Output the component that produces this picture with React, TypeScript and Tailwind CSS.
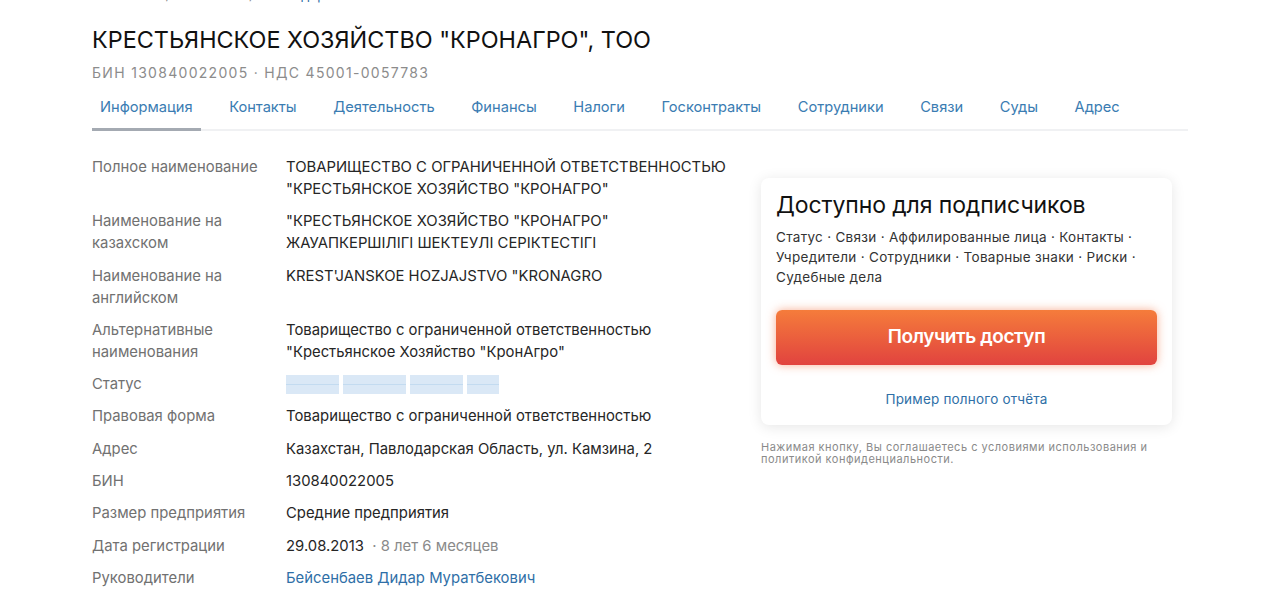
import React from "react";

const tabs = ["Информация", "Контакты", "Деятельность", "Финансы", "Налоги", "Госконтракты", "Сотрудники", "Связи", "Суды", "Адрес"];

function Blur({ w }: { w: number }) {
  return (
    <span className="inline-flex flex-col justify-center h-[19px] bg-[#dae8f6]" style={{ width: w }}>
      <span className="block h-[1px] bg-[#c3dbf0]" />
    </span>
  );
}

const rows: { label: React.ReactNode; value: React.ReactNode }[] = [
  { label: "Полное наименование", value: <>ТОВАРИЩЕСТВО С ОГРАНИЧЕННОЙ ОТВЕТСТВЕННОСТЬЮ<br />"КРЕСТЬЯНСКОЕ ХОЗЯЙСТВО "КРОНАГРО"</> },
  { label: <>Наименование на<br />казахском</>, value: <>"КРЕСТЬЯНСКОЕ ХОЗЯЙСТВО "КРОНАГРО"<br />ЖАУАПКЕРШІЛІГІ ШЕКТЕУЛІ СЕРІКТЕСТІГІ</> },
  { label: <>Наименование на<br />английском</>, value: <>KREST'JANSKOE HOZJAJSTVO "KRONAGRO</> },
  { label: <>Альтернативные<br />наименования</>, value: <>Товарищество с ограниченной ответственностью<br />"Крестьянское Хозяйство "КронАгро"</> },
  { label: "Статус", value: <span className="flex gap-[4px] items-center h-[22px]"><Blur w={53} /><Blur w={63} /><Blur w={53} /><Blur w={32} /></span> },
  { label: "Правовая форма", value: "Товарищество с ограниченной ответственностью" },
  { label: "Адрес", value: "Казахстан, Павлодарская Область, ул. Камзина, 2" },
  { label: "БИН", value: "130840022005" },
  { label: "Размер предприятия", value: "Средние предприятия" },
  { label: "Дата регистрации", value: <>29.08.2013 <span className="text-[#8a8a8a]">&nbsp;· 8 лет 6 месяцев</span></> },
  { label: "Руководители", value: <span className="text-[#2f6fa7]">Бейсенбаев Дидар Муратбекович</span> },
];

export default function App() {
  return (
    <div className="w-[1280px] h-[601px] overflow-hidden bg-white font-['Inter','Liberation_Sans',sans-serif] text-[#222]">
      <div className="ml-[92px] w-[1096px]">
        <div className="-mt-[13px] h-[16px] text-[13px] leading-[16px] text-[#8a8a8a] flex gap-[6px] tracking-[0.3px]">
          <span>Казахстан</span><span>/</span><span>Компании</span><span>/</span><span className="text-[#2f6fa7]">Павлодарская</span>
        </div>
        <h1 className="mt-[22px] text-[23.4px] leading-[30px] font-normal text-[#111]">
          КРЕСТЬЯНСКОЕ ХОЗЯЙСТВО "КРОНАГРО", ТОО
        </h1>
        <div className="mt-[9px] text-[14px] leading-[18px] tracking-[1.3px] text-[#8c8c8c]">
          БИН 130840022005 · НДС 45001-0057783
        </div>
        <div className="mt-[9px] flex border-b-[2px] border-[#f0f1f3]">
          {tabs.map((t, i) => (
            <div
              key={t}
              className={
                "px-[8px] mr-[20.6px] pt-[6px] pb-[11px] text-[14.65px] leading-[20px] text-[#3a7cb2] -mb-[2px] border-b-[3px] " +
                (i === 0 ? "border-[#a4aab2]" : "border-transparent")
              }
            >
              {t}
            </div>
          ))}
        </div>
        <div className="flex mt-[25px]">
          <div className="flex-1 flex flex-col gap-[10.3px] text-[14.85px] leading-[22px]">
            {rows.map((r, i) => (
              <div key={i} className="flex">
                <div className="w-[194px] shrink-0 text-[#717171]">{r.label}</div>
                <div className="text-[#262626]">{r.value}</div>
              </div>
            ))}
          </div>
          <div className="w-[411px] mr-[16px] pt-[22px]">
            <div className="rounded-[8px] bg-white shadow-[0_2px_14px_rgba(0,0,0,0.10)] px-[15px] pt-[12px] pb-[17px]">
              <div className="text-[23px] leading-[30px] text-[#111] tracking-[-0.1px]">Доступно для подписчиков</div>
              <div className="mt-[7px] text-[13.5px] leading-[20px] text-[#333] tracking-[0.3px]">
                Статус · Связи · Аффилированные лица · Контакты · Учредители · Сотрудники · Товарные знаки · Риски · Судебные дела
              </div>
              <div className="mt-[23px] h-[55px] rounded-[6px] bg-[linear-gradient(180deg,#f57c3b,#e1433f)] shadow-[0_0_10px_rgba(242,110,60,0.55)] flex items-center justify-center text-white text-[19px] font-semibold tracking-[-0.4px]">
                Получить доступ
              </div>
              <div className="mt-[25px] text-center text-[13.5px] leading-[18px] text-[#2f6fa7] tracking-[0.2px]">Пример полного отчёта</div>
            </div>
            <div className="mt-[16px] text-[11px] leading-[12px] text-[#8a8a8a] tracking-[0.5px] pr-[10px]">
              Нажимая кнопку, Вы соглашаетесь с условиями использования и политикой конфиденциальности.
            </div>
          </div>
        </div>
      </div>
    </div>
  );
}
